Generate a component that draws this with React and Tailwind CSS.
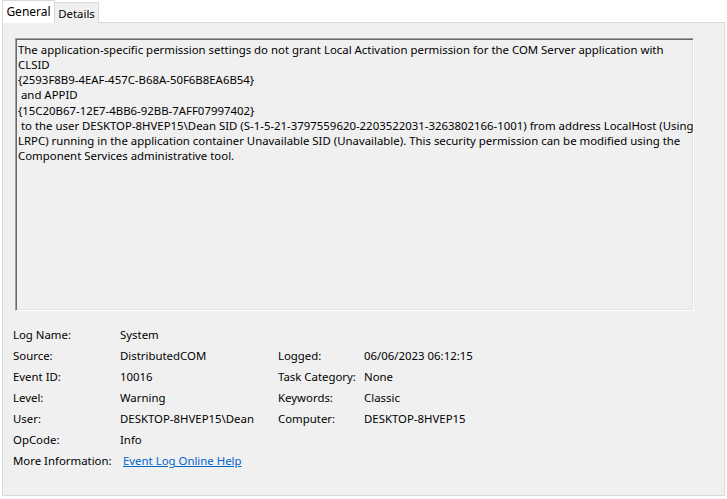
const font = { fontFamily: '"Noto Sans", "Liberation Sans", sans-serif' };

const message = [
  "The application-specific permission settings do not grant Local Activation permission for the COM Server application with",
  "CLSID",
  "{2593F8B9-4EAF-457C-B68A-50F6B8EA6B54}",
  " and APPID",
  "{15C20B67-12E7-4BB6-92BB-7AFF07997402}",
  " to the user DESKTOP-8HVEP15\\Dean SID (S-1-5-21-3797559620-2203522031-3263802166-1001) from address LocalHost (Using",
  "LRPC) running in the application container Unavailable SID (Unavailable). This security permission can be modified using the",
  "Component Services administrative tool.",
];

const left = [
  ["Log Name:", "System"],
  ["Source:", "DistributedCOM"],
  ["Event ID:", "10016"],
  ["Level:", "Warning"],
  ["User:", "DESKTOP-8HVEP15\\Dean"],
  ["OpCode:", "Info"],
];

const right = [
  null,
  ["Logged:", "06/06/2023 06:12:15"],
  ["Task Category:", "None"],
  ["Keywords:", "Classic"],
  ["Computer:", "DESKTOP-8HVEP15"],
  null,
];

function Row({ item, labelW }) {
  if (!item) return <div className="h-[21px]" />;
  return (
    <div className="flex h-[21px] items-center">
      <span className={labelW}>{item[0]}</span>
      <span>{item[1]}</span>
    </div>
  );
}

export default function App() {
  return (
    <div className="w-[727px] h-[499px] bg-white text-[11.4px] text-black" style={font}>
      {/* tabs */}
      <div className="flex items-end h-[23px] pl-[2px]">
        <div className="h-[23px] w-[53px] bg-white border border-b-0 border-[#d9d9d9] flex items-start justify-center pt-[2px] relative z-10 text-[12px]">
          General
        </div>
        <div className="h-[21px] w-[44px] bg-[#f0f0f0] border border-l-0 border-b-0 border-[#d9d9d9] flex items-center justify-center pt-[2px]">
          Details
        </div>
      </div>
      {/* panel */}
      <div className="mx-[2px] h-[474px] border border-[#d9d9d9] bg-[#f0f0f0] -mt-px pt-[15px] pl-[12px] pr-[30px]">
        <div className="h-[273px] w-[679px] border border-t-[#a0a0a0] border-l-[#a0a0a0] border-b-white border-r-white shadow-[inset_1px_1px_0_#696969,inset_-1px_-1px_0_#e3e3e3] pl-[2px] pt-[3px] leading-[15.15px]">
          {message.map((line, i) => (
            <div key={i} className="whitespace-pre">{line}</div>
          ))}
        </div>
        <div className="mt-[13px] -ml-[2px] flex">
          <div className="w-[265px] flex flex-col">
            {left.map((item, i) => (
              <Row key={i} item={item} labelW="w-[107px]" />
            ))}
            <div className="flex h-[21px] items-center">
              <span className="w-[110px]">More Information:</span>
              <span className="text-[#0066cc] underline">Event Log Online Help</span>
            </div>
          </div>
          <div className="flex flex-col">
            {right.map((item, i) => (
              <Row key={i} item={item} labelW="w-[86px]" />
            ))}
          </div>
        </div>
      </div>
    </div>
  );
}
